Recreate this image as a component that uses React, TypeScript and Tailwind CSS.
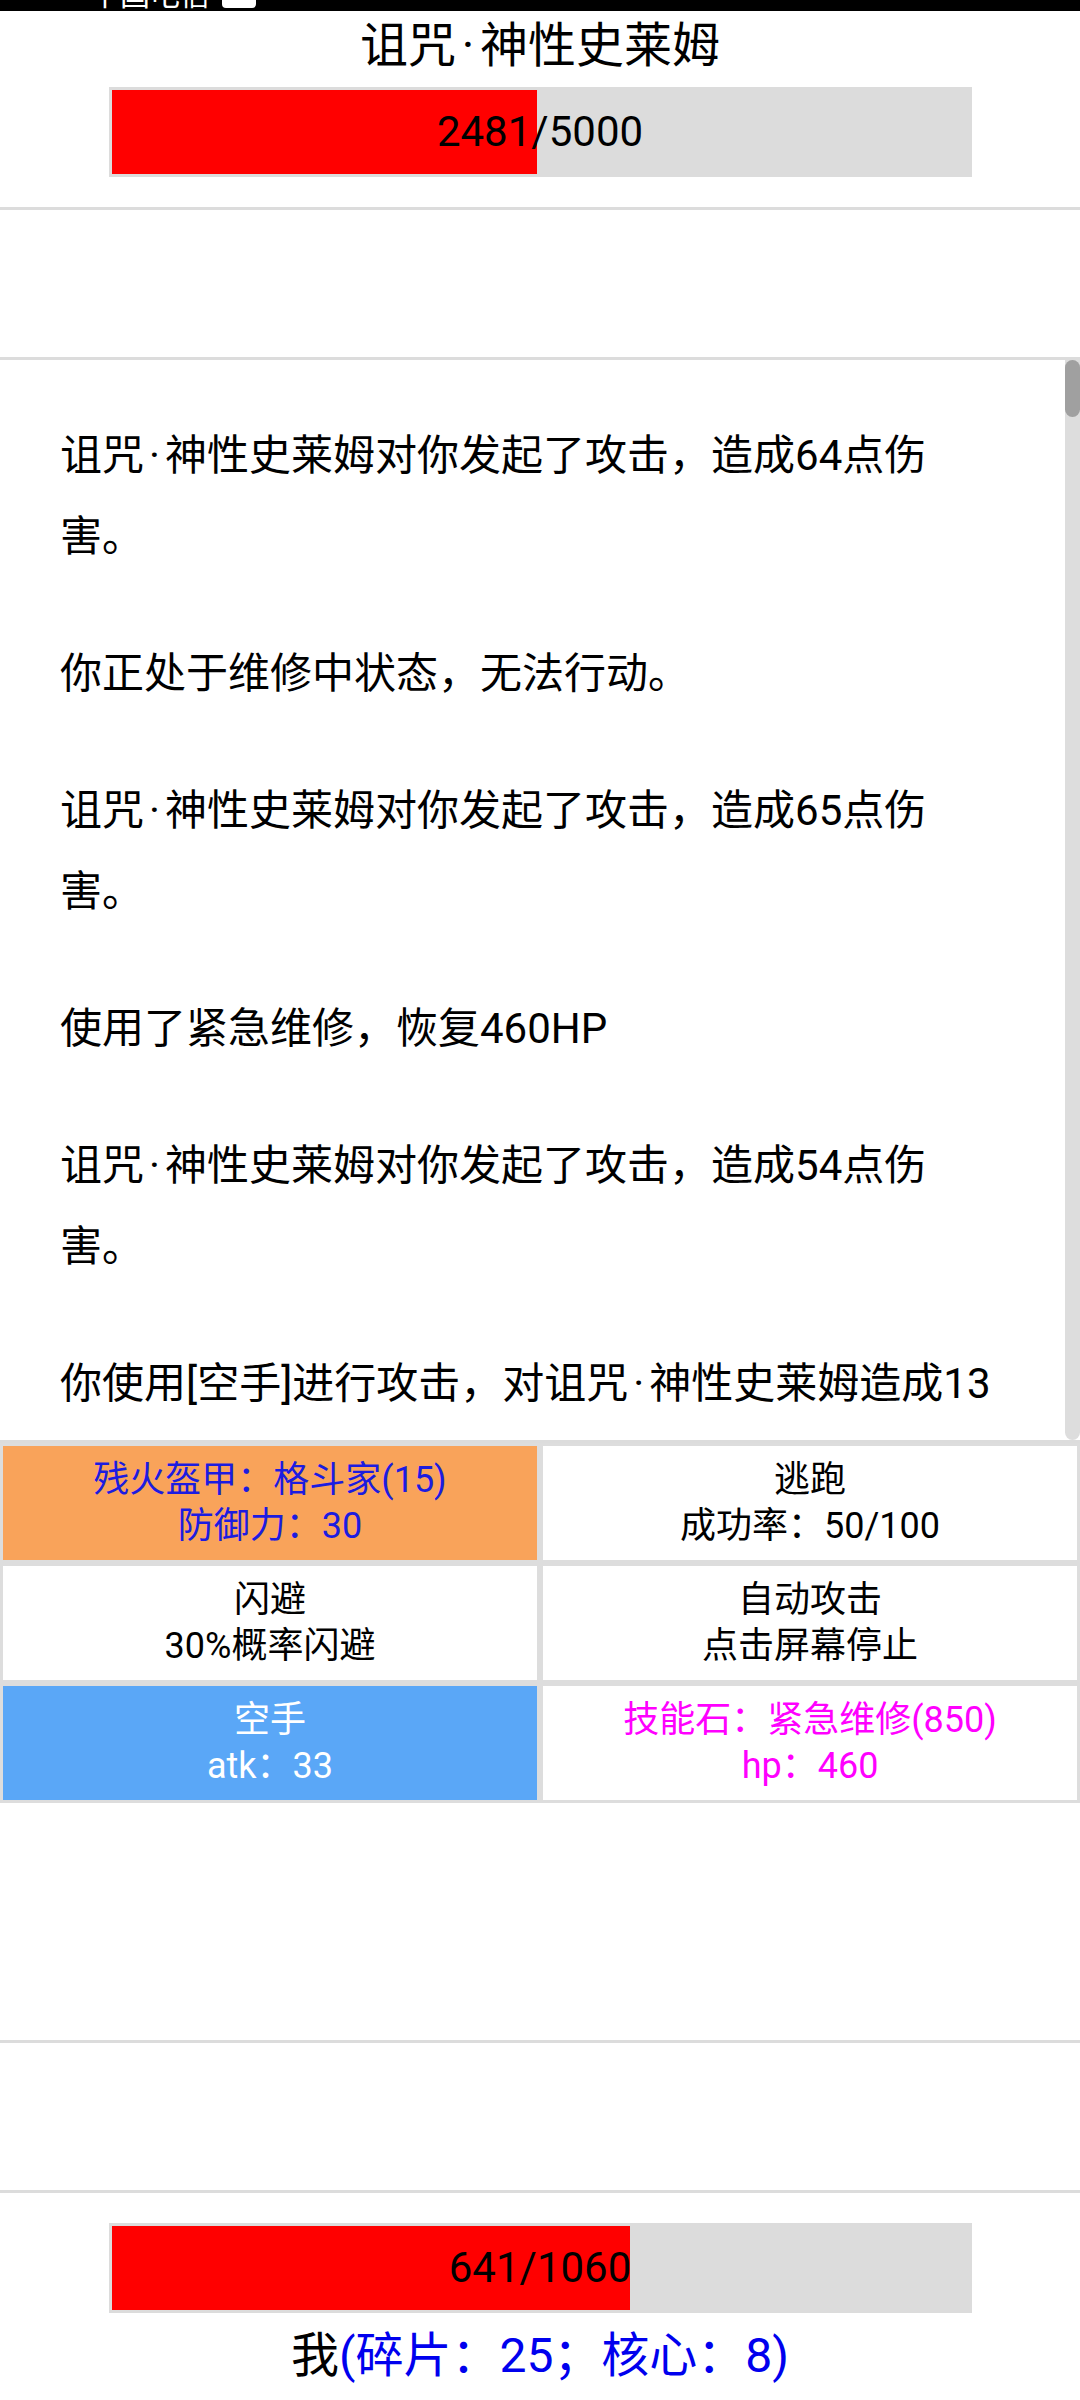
import React from 'react';

const FONT = { fontFamily: 'Roboto, "Noto Sans CJK SC", sans-serif' };

// the middle dot sits with a little air around it in the game's font
const Txt: React.FC<{ s: string }> = ({ s }) => (
  <>
    {s.split('·').map((part, i) => (
      <React.Fragment key={i}>
        {i > 0 && <span className="px-[0.12em]">·</span>}
        {part}
      </React.Fragment>
    ))}
  </>
);

interface HpBarProps {
  hp: number;
  max: number;
}

const HpBar: React.FC<HpBarProps> = ({ hp, max }) => {
  const pct = (hp / max) * 100;
  return (
    <div className="relative w-[863px] h-[90px] bg-[#dcdcdc] p-[3px]">
      <div className="h-full bg-[#ff0000]" style={{ width: `${pct}%` }} />
      <div className="absolute inset-0 flex items-center justify-center text-[42px] text-black leading-none">
        {hp}/{max}
      </div>
    </div>
  );
};

const Divider = () => <div className="h-[3px] bg-[#dcdcdc]" />;

const logs = [
  '诅咒·神性史莱姆对你发起了攻击，造成64点伤害。',
  '你正处于维修中状态，无法行动。',
  '诅咒·神性史莱姆对你发起了攻击，造成65点伤害。',
  '使用了紧急维修，恢复460HP',
  '诅咒·神性史莱姆对你发起了攻击，造成54点伤害。',
  '你使用[空手]进行攻击，对诅咒·神性史莱姆造成13点伤害。',
  '诅咒·神性史莱姆对你发起了攻击，造成61点伤害。',
];

interface Action {
  title: string;
  sub: string;
  cls: string;
}

const actions: Action[] = [
  { title: '残火盔甲：格斗家(15)', sub: '防御力：30', cls: 'bg-[#f9a35a] text-[#1c1ce0]' },
  { title: '逃跑', sub: '成功率：50/100', cls: 'bg-white text-black' },
  { title: '闪避', sub: '30%概率闪避', cls: 'bg-white text-black' },
  { title: '自动攻击', sub: '点击屏幕停止', cls: 'bg-white text-black' },
  { title: '空手', sub: 'atk：33', cls: 'bg-[#5aa7f7] text-white' },
  { title: '技能石：紧急维修(850)', sub: 'hp：460', cls: 'bg-white text-[#ff00ff]' },
];

export default function App() {
  return (
    <div className="w-[1080px] h-[2400px] bg-white flex flex-col overflow-hidden" style={FONT}>
      {/* status bar, cut off at the top */}
      <div className="h-[11px] bg-black overflow-hidden flex items-start pl-[90px] gap-3">
        <span className="text-white text-[30px] leading-none -mt-[20px]">中国电信</span>
        <span className="block w-[34px] h-[16px] rounded-[4px] bg-white -mt-[8px]" />
      </div>

      {/* enemy */}
      <div className="h-[196px] flex flex-col items-center pt-[6px]">
        <div className="text-[48px] leading-[58px] text-black">
          <Txt s="诅咒·神性史莱姆" />
        </div>
        <div className="mt-[12px]">
          <HpBar hp={2481} max={5000} />
        </div>
      </div>
      <Divider />
      <div className="h-[147px]" />
      <Divider />

      {/* battle log */}
      <div className="h-[1080px] flex overflow-hidden">
        <div className="flex-1 pl-[60px] pr-[69px] pt-[55px] flex flex-col gap-[56px] overflow-hidden">
          {logs.map((line, i) => (
            <p key={i} className="text-[42px] leading-[81px] text-black shrink-0">
              <Txt s={line} />
            </p>
          ))}
        </div>
        <div className="w-[15px] bg-[#dddddd] rounded-b-full flex flex-col">
          <div className="h-[57px] bg-[#a0a0a0] rounded-full" />
        </div>
      </div>
      <Divider />

      {/* actions */}
      <div className="grid grid-cols-2">
        {actions.map((a) => (
          <div
            key={a.title}
            className={`h-[120px] border-[3px] border-[#dddddd] flex flex-col items-center justify-center text-[36px] leading-[46px] ${a.cls}`}
          >
            <div>{a.title}</div>
            <div>{a.sub}</div>
          </div>
        ))}
      </div>

      <div className="h-[237px]" />
      <Divider />
      <div className="h-[147px]" />
      <Divider />

      {/* player */}
      <div className="flex flex-col items-center pt-[30px]">
        <HpBar hp={641} max={1060} />
        <div className="mt-[14px] text-[48px] leading-[58px]">
          <span className="text-black">我</span>
          <span className="text-[#0000ee]">(碎片：25；核心：8)</span>
        </div>
      </div>
    </div>
  );
}
